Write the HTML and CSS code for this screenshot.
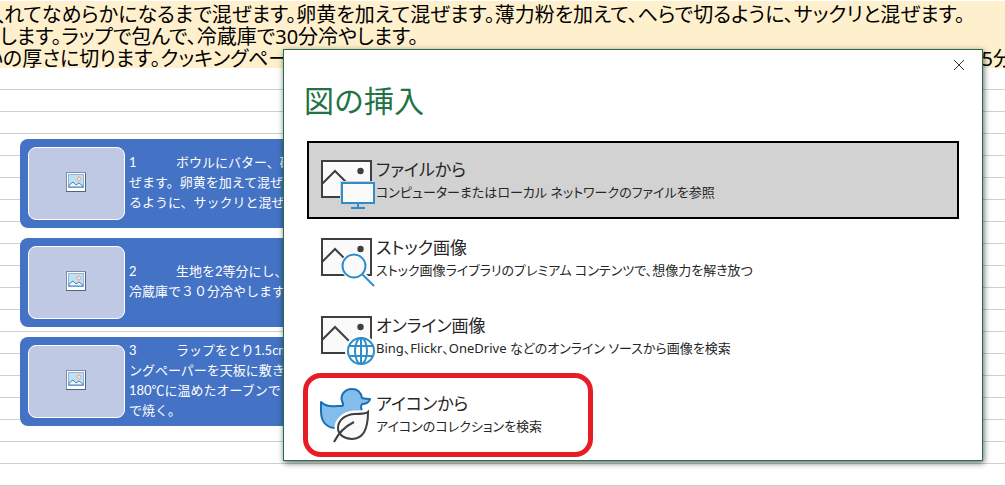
FILE: index.html
```html
<!DOCTYPE html>
<html lang="ja">
<head>
  <meta charset="UTF-8">
  <meta name="viewport" content="width=device-width, initial-scale=1">
  <title>図の挿入</title>
  <link rel="stylesheet" href="styles.css">
</head>
<body>
  <svg class="defs" width="0" height="0" aria-hidden="true">
    <symbol id="photo" viewBox="0 0 20 20">
      <rect x="0.5" y="0.5" width="19" height="19" fill="#fff" stroke="#7b8ba8"/>
      <path d="M0 19.5H19.5V1" fill="none" stroke="#4f6384"/>
      <rect x="2.5" y="2.5" width="15" height="13" fill="#bfe0f5" stroke="#8fb4d6"/>
      <circle cx="13" cy="7" r="2" fill="#fbe3cf" stroke="#e0a888"/>
      <path d="M3 15V13L7 10L10 13L13 11L17 14V15Z" fill="#eef6fc" stroke="#4d86c0"/>
    </symbol>
    <symbol id="picture" viewBox="0 -4 56 60">
      <rect x="2" y="3" width="49" height="36" fill="#fafafa" stroke="#3f3f3f" stroke-width="2"/>
      <path d="M2 26L15 13L29 27" fill="none" stroke="#3f3f3f" stroke-width="2"/>
      <circle cx="40.500" cy="13" r="3.200" fill="#3f3f3f"/>
    </symbol>
  </svg>

  <main class="sheet">
    <div class="cells">
      <p class="row cut">入れてなめらかになるまで混ぜます。卵黄を加えて混ぜます。薄力粉を加えて、へらで切るように、サックリと混ぜます。</p>
      <p class="row">します。ラップで包んで、冷蔵庫で30分冷やします。</p>
      <p class="row cut split"><span>いの厚さに切ります。クッキングペー</span><span>5分</span></p>
    </div>

    <div class="steps">
      <div class="step">
        <div class="thumb"><svg width="20" height="20"><use href="#photo"/></svg></div>
        <p>1&#9;ボウルにバター、砂<br>ぜます。卵黄を加えて混ぜ<br>るように、サックリと混ぜ</p>
      </div>
      <div class="step">
        <div class="thumb"><svg width="20" height="20"><use href="#photo"/></svg></div>
        <p>2&#9;生地を2等分にし、<br>冷蔵庫で３０分冷やします</p>
      </div>
      <div class="step">
        <div class="thumb"><svg width="20" height="20"><use href="#photo"/></svg></div>
        <p>3&#9;ラップをとり1.5cm<br>ングペーパーを天板に敷き<br>180℃に温めたオーブンで<br>で焼く。</p>
      </div>
    </div>

    <section class="dialog" role="dialog" aria-labelledby="dialog-title">
      <button class="close" aria-label="閉じる">
        <svg width="12" height="12" viewBox="0 0 12 12"><path d="M1 1L11 11M11 1L1 11" stroke="#333" fill="none"/></svg>
      </button>
      <h1 id="dialog-title">図の挿入</h1>

      <div class="options">
        <button class="option selected">
          <svg class="icon" viewBox="0 -4 56 60">
            <use href="#picture" x="0" y="-4" width="56" height="60"/>
            <path d="M20 23H56V47H20Z" fill="#d2d2d2"/>
            <rect x="22" y="25" width="32" height="20" fill="#fafafa" stroke="#2f8dcb" stroke-width="2"/>
            <path d="M38 45V50M31 50H45" fill="none" stroke="#2f8dcb" stroke-width="2"/>
          </svg>
          <span class="label">
            <span class="name">ファイルから</span>
            <span class="desc">コンピューターまたはローカル ネットワークのファイルを参照</span>
          </span>
        </button>

        <button class="option">
          <svg class="icon" viewBox="0 -4 56 60">
            <use href="#picture" x="0" y="-4" width="56" height="60"/>
            <path d="M42 38L54 50" stroke="#fff" stroke-width="6"/>
            <circle cx="34" cy="30" r="13.500" fill="#fff"/>
            <circle cx="34" cy="30" r="11.500" fill="#fafafa" stroke="#2f8dcb" stroke-width="2"/>
            <path d="M42 38L54 50" stroke="#2f8dcb" stroke-width="2"/>
          </svg>
          <span class="label">
            <span class="name">ストック画像</span>
            <span class="desc">ストック画像ライブラリのプレミアム コンテンツで、想像力を解き放つ</span>
          </span>
        </button>

        <button class="option">
          <svg class="icon" viewBox="0 -4 56 60">
            <use href="#picture" x="0" y="-4" width="56" height="60"/>
            <circle cx="41" cy="37" r="16" fill="#fff"/>
            <g fill="none" stroke="#2f8dcb" stroke-width="2">
              <circle cx="41" cy="37" r="13"/>
              <ellipse cx="41" cy="37" rx="6" ry="13"/>
              <path d="M41 24V50M30 32H52M30 42H52"/>
            </g>
          </svg>
          <span class="label">
            <span class="name">オンライン画像</span>
            <span class="desc">Bing、Flickr、OneDrive などのオンライン ソースから画像を検索</span>
          </span>
        </button>

        <button class="option marked">
          <svg class="icon" viewBox="0 -4 56 60">
            <path d="M1 10C4 13 9 15 17 14H22C24 13 23 11 22 9C20 3 25 -3 32 -3C38 -3 41 1 42 6C45 7 48 7 50 7C50 10 46 12 42 12C40 15 41 16 42 19C43 28 36 36 24 36H14C5 35 1 28 1 19Z" fill="#83bdec" stroke="#1c6fb5" stroke-width="2" stroke-linejoin="round"/>
            <path d="M48 20C46 22 41 22 34 22C24 23 18 29 18 36C18 43 25 47 32 47C42 47 48 38 48 20Z" fill="#fff" stroke="#fff" stroke-width="7"/>
            <path d="M48 20C46 22 41 22 34 22C24 23 18 29 18 36C18 43 25 47 32 47C42 47 48 38 48 20Z" fill="#fafafa" stroke="#3f3f3f" stroke-width="2"/>
            <path d="M14 50C18 42 24 35 34 30" fill="none" stroke="#3f3f3f" stroke-width="2"/>
          </svg>
          <span class="label">
            <span class="name">アイコンから</span>
            <span class="desc">アイコンのコレクションを検索</span>
          </span>
        </button>
      </div>
    </section>
  </main>
</body>
</html>
```
FILE: styles.css
```css
*, *::after {
  box-sizing: border-box;
}

body {
  margin: 0;
  font-family: "Noto Sans", "Noto Sans CJK JP", sans-serif;
  color: #000;
}

p, h1 {
  margin: 0;
  font-weight: normal;
}

.defs {
  position: absolute;
}

.sheet {
  position: relative;
  min-height: 100vh;
  padding-top: 1px;
  overflow: hidden;
  background: repeating-linear-gradient(#fff 0, #fff 21px, #cfcfcf 21px, #cfcfcf 22px) 0 2px;
}

/* worksheet rows */
.cells {
  padding-top: 1px;
  background: #fff0cd;
}

.row {
  height: 22px;
  line-height: 25px;
  font-size: 20px;
  font-feature-settings: "palt";
  white-space: nowrap;
}

.row.cut {
  margin: 0 -8px 0 -16px;
}

.row.split {
  display: flex;
  justify-content: space-between;
}

/* diagram behind the dialog */
.steps {
  position: absolute;
  top: 139px;
  left: 20px;
  display: flex;
  flex-direction: column;
  gap: 10px;
  width: 400px;
}

.step {
  display: flex;
  align-items: center;
  gap: 4px;
  height: 89px;
  padding: 8px;
  border-radius: 8px;
  background: #4472c4;
  color: #fff;
}

.thumb {
  display: flex;
  align-items: center;
  justify-content: center;
  width: 97px;
  height: 73px;
  padding: 0 2px 4px 0;
  border: 1px solid #fff;
  border-radius: 8px;
  background: #bfc9e4;
}

.step p {
  padding-bottom: 4px;
  font-family: Lato, "Noto Sans CJK JP", sans-serif;
  font-size: 13px;
  line-height: 20px;
  white-space: pre;
  tab-size: 47px;
}

/* dialog */
.dialog {
  position: absolute;
  top: 49px;
  left: 283px;
  right: 22px;
  padding: 29px 23px 7px;
  border: 1px solid #217346;
  background: #fff;
  box-shadow: 1px 2px 6px rgba(0, 0, 0, 0.6);
}

.dialog h1 {
  margin-left: -3px;
  color: #217346;
  font-size: 30px;
  line-height: 44px;
}

.close {
  position: absolute;
  top: 8px;
  right: 16px;
  display: flex;
  padding: 1px;
  border: none;
  background: none;
}

.options {
  margin-top: 18px;
}

.option {
  position: relative;
  display: flex;
  align-items: center;
  width: 100%;
  height: 78px;
  padding: 0 11px;
  border: 2px solid transparent;
  background: none;
  color: #262626;
  font-family: "Noto Sans", "Noto Sans CJK JP", sans-serif;
  font-feature-settings: "palt";
  text-align: left;
}

.option.selected {
  border-color: #000;
  background: #d2d2d2;
}

.icon {
  width: 56px;
  height: 60px;
  margin-top: 8px;
}

.label {
  display: flex;
  flex-direction: column;
}

.name {
  font-size: 17px;
  line-height: 24px;
}

.desc {
  font-size: 13px;
  line-height: 20px;
}

.option.marked::after {
  content: "";
  position: absolute;
  top: -4px;
  left: -6px;
  width: 290px;
  height: 84px;
  border: 5px solid #e81c24;
  border-radius: 18px;
}
```
